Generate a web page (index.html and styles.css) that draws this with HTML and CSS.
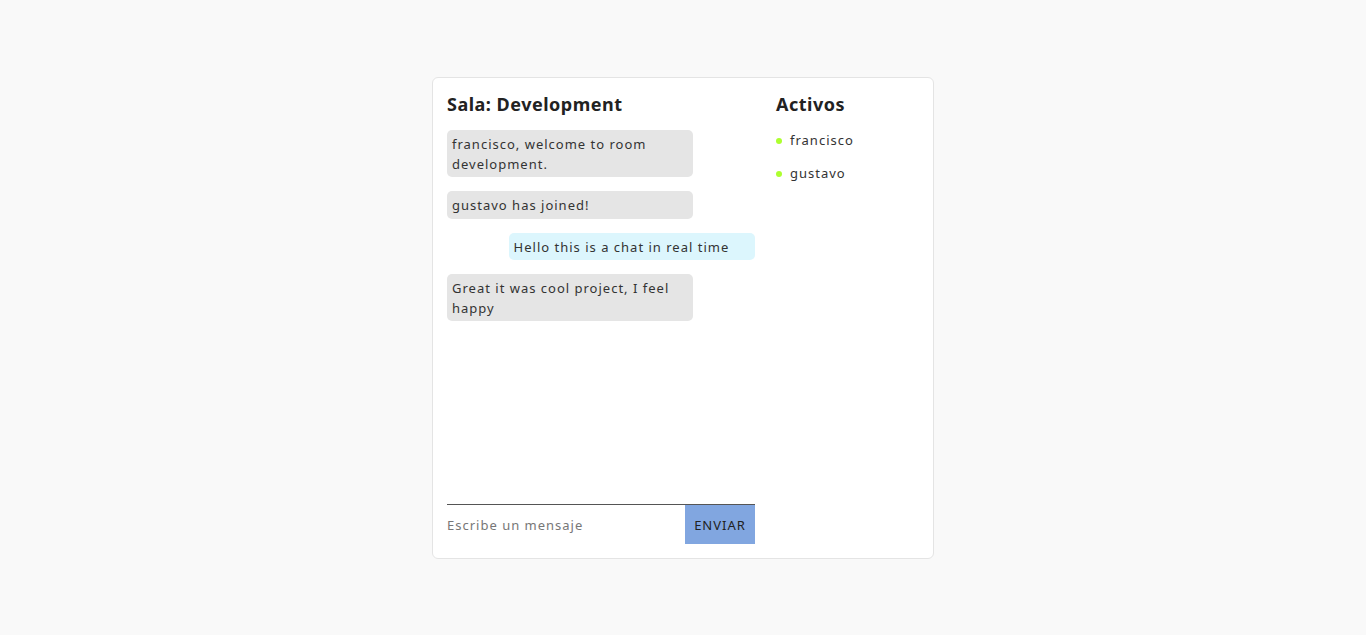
FILE: index.html
```html
<!DOCTYPE html>
<html lang="es">
<head>
<meta charset="utf-8">
<title>Chat</title>
<link rel="stylesheet" href="styles.css">
</head>
<body>
<div class="page">
  <div class="card">
    <section class="chat">
      <h2 class="title">Sala: Development</h2>
      <div class="messages">
        <div class="msg other">francisco, welcome to room development.</div>
        <div class="msg other">gustavo has joined!</div>
        <div class="msg mine">Hello this is a chat in real time</div>
        <div class="msg other">Great it was cool project, I feel happy</div>
      </div>
      <form class="composer">
        <input class="input" type="text" placeholder="Escribe un mensaje">
        <button class="send" type="button">ENVIAR</button>
      </form>
    </section>
    <aside class="users">
      <h2 class="title">Activos</h2>
      <ul class="user-list">
        <li class="user"><span class="dot"></span>francisco</li>
        <li class="user"><span class="dot"></span>gustavo</li>
      </ul>
    </aside>
  </div>
</div>
</body>
</html>
```
FILE: styles.css
```css
* { box-sizing: border-box; }
html, body { margin: 0; padding: 0; }
body {
  background: #f9f9f9;
  font-family: "Noto Sans", "Open Sans", sans-serif;
  color: #222;
  height: 635px;
}
.page {
  display: flex;
  justify-content: center;
  padding-top: 77px;
}
.card {
  width: 502px;
  height: 482px;
  background: #fff;
  border: 1px solid #e4e4e4;
  border-radius: 6px;
  padding: 13px 14px 14px 14px;
  display: flex;
  gap: 21px;
}
.chat {
  width: 308px;
  display: flex;
  flex-direction: column;
}
.title {
  margin: 0;
  font-size: 18px;
  font-weight: 700;
  letter-spacing: 0.5px;
  line-height: 26px;
  color: #222;
}
.messages {
  flex: 1;
  display: flex;
  flex-direction: column;
  gap: 14px;
  padding-top: 13px;
}
.msg {
  width: 80%;
  padding: 5px 5px 3px;
  border-radius: 5px;
  font-size: 13px;
  line-height: 19.5px;
  letter-spacing: 1px;
  color: #333;
}
.msg.other { background: #e5e5e5; align-self: flex-start; }
.msg.mine { background: #dcf6fd; align-self: flex-end; }
.composer {
  display: flex;
  height: 40px;
  border-top: 1px solid #555;
  margin: 0;
}
.input {
  flex: 1;
  border: none;
  outline: none;
  padding: 0;
  font-family: inherit;
  font-size: 13px;
  letter-spacing: 1px;
  color: #333;
  background: transparent;
}
.input::placeholder { color: #777; }
.send {
  width: 70px;
  border: none;
  background: #81a6e0;
  color: #222;
  font-family: inherit;
  font-size: 13px;
  letter-spacing: 1px;
  padding: 0;
}
.users { flex: 1; }
.user-list {
  list-style: none;
  margin: 0;
  padding: 14px 0 0 0;
  display: flex;
  flex-direction: column;
  gap: 14px;
}
.user {
  display: flex;
  align-items: center;
  gap: 8px;
  font-size: 13px;
  line-height: 19px;
  letter-spacing: 1px;
  color: #333;
}
.dot {
  width: 6px;
  height: 6px;
  border-radius: 50%;
  background: #adff2f;
}
```
